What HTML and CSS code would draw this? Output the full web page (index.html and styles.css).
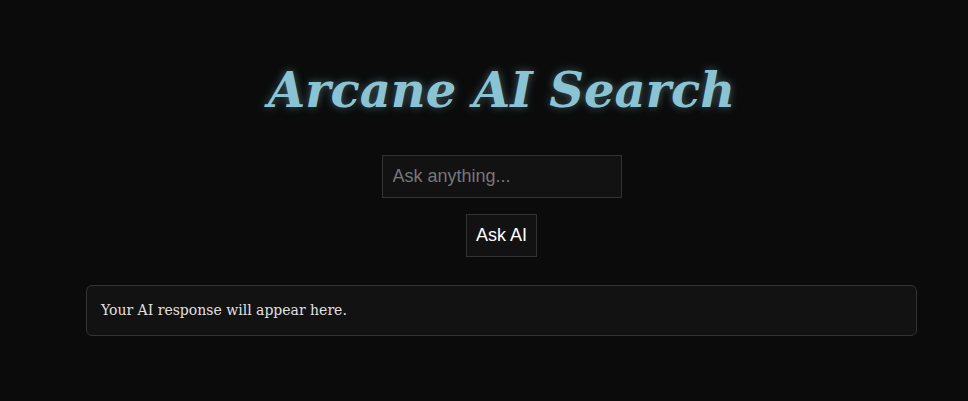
FILE: index.html
```html
<!DOCTYPE html>
<html lang="en">
<head>
  <meta charset="UTF-8" />
  <meta name="viewport" content="width=device-width, initial-scale=1.0" />
  <title>Arcane AI Search</title>
  <link rel="stylesheet" href="styles.css">
</head>
<body>
  <div class="container">
    <h1>Arcane AI Search</h1>

    <input type="text" id="query" placeholder="Ask anything...">
    <button onclick="ask()">Ask AI</button>

    <div class="response" id="response">Your AI response will appear here.</div>
  </div>

  <script>
    function ask() {
      const q = document.getElementById('query').value.trim();
      if (!q) return;
      document.getElementById('response').innerText = "Thinking about: " + q;
    }
  </script>
</body>
</html>
```

FILE: styles.css
```css
body {
  margin: 0;
  background: #0b0b0b;
  color: #e0e0e0;
  font-family: 'DejaVu Serif', Georgia, serif;
}

.container {
  display: flex;
  flex-direction: column;
  align-items: center;
  padding: 62px 51px 0 86px;
}

h1 {
  margin: 0 0 37px;
  font-size: 48px;
  font-style: italic;
  font-weight: bold;
  color: #8ac4d4;
  text-shadow: 0 0 8px rgba(138, 196, 212, 0.45);
}

input {
  width: 240px;
  height: 43px;
  box-sizing: border-box;
  padding: 0 10px;
  background: #121212;
  color: #e0e0e0;
  border: 1px solid #333;
  font-family: 'Liberation Sans', Arial, sans-serif;
  font-size: 18px;
  outline: none;
}

input::placeholder {
  color: #777;
}

button {
  margin-top: 16px;
  height: 43px;
  width: 71px;
  padding: 0;
  background: #121212;
  color: #fff;
  border: 1px solid #333;
  font-family: 'Liberation Sans', Arial, sans-serif;
  font-size: 18px;
  cursor: pointer;
}

.response {
  align-self: stretch;
  margin-top: 28px;
  padding: 15px 14px;
  background: #121212;
  border: 1px solid #333;
  border-radius: 6px;
  font-size: 14px;
  line-height: 19px;
  color: #e0e0e0;
}
```
